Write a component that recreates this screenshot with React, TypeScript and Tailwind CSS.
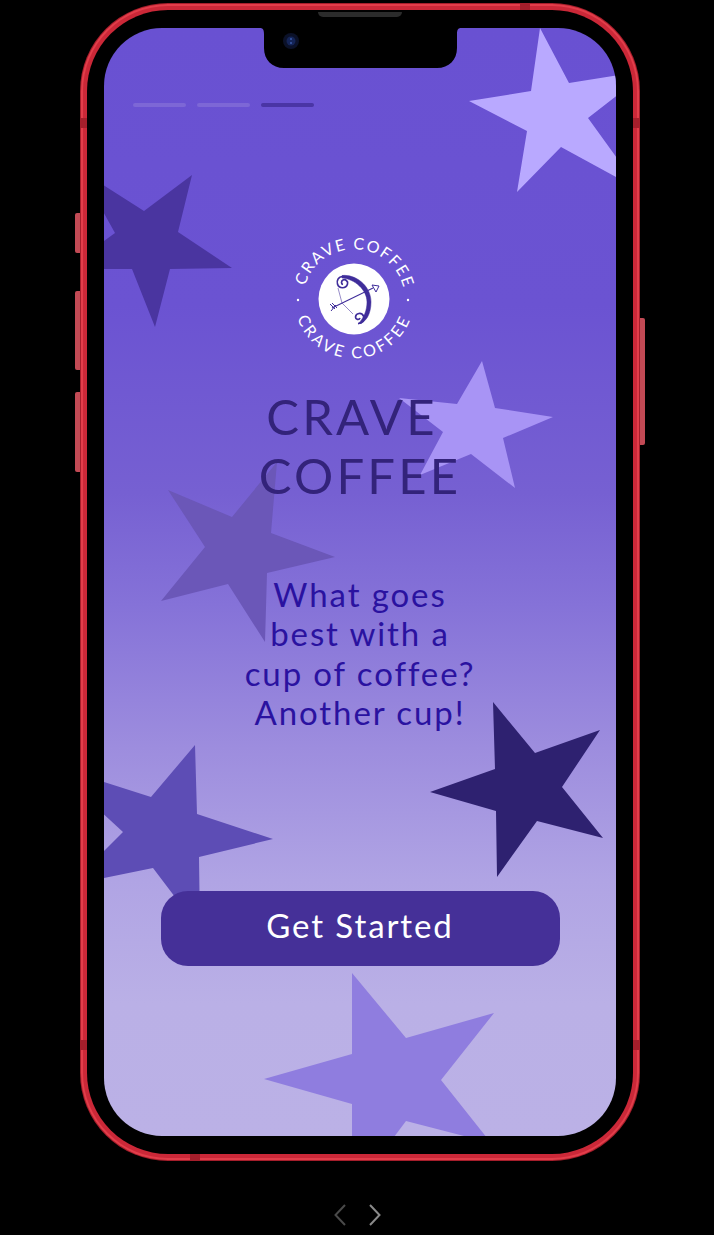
import React from "react";

const stars: { fill: string; points: string }[] = [
  { fill: "#b9a9ff", points: "540,28 569,83 650,70 588,118 640,190 561,147 517,192 527,131 469,101 531,91" },
  { fill: "#4a35a0", points: "192,175 178,232 232,268 170,269 155,327 132,269 65,269 115,233 80,170 144,211" },
  { fill: "#a894f5", points: "482,361 495,408 553,417 503,438 515,488 471,454 420,475 443,432 399,398 457,404" },
  { fill: "#6b57b8", points: "168,490 232,517 277,462 271,533 335,557 267,573 265,642 228,584 161,601 205,547" },
  { fill: "#2e2170", points: "493,702 535,753 600,730 562,787 603,838 537,821 497,877 496,811 430,792 495,769" },
  { fill: "#5d4db5", points: "195,745 197,814 273,839 199,857 200,930 153,868 70,885 123,832 50,765 151,797" },
  { fill: "#8f7ddf", points: "352,973 406,1038 494,1013 441,1080 491,1143 406,1121 352,1193 352,1104 264,1079 352,1054" },
];

function Logo() {
  return (
    <svg width="130" height="130" viewBox="0 0 130 130" className="block">
      <defs>
        <path id="arcTop" d="M 16 52 A 51 51 0 0 1 114 52" />
        <path id="arcBottom" d="M 8.2 84 A 60 60 0 0 0 120.5 87" />
      </defs>
      <text fill="#ffffff" fontSize="16" fontFamily="Lato, sans-serif">
        <textPath href="#arcTop" textLength="133" lengthAdjust="spacing">CRAVE COFFEE</textPath>
      </text>
      <text fill="#ffffff" fontSize="16" fontFamily="Lato, sans-serif">
        <textPath href="#arcBottom" textLength="146" lengthAdjust="spacing">CRAVE COFFEE</textPath>
      </text>
      <circle cx="9" cy="66" r="1.2" fill="#fff" />
      <circle cx="119" cy="66" r="1.2" fill="#fff" />
      <circle cx="65" cy="65" r="35.5" fill="#fff" />
      <path d="M53 41.5 C 67 40 82 52 82 68 C 82 80 77 89 69 90 C 75 84 78 76 78 68 C 78 56 66 45 53 44 Z" fill="#3f2d9a" stroke="#3f2d9a" strokeWidth="0.5" />
      <path d="M54 42.5 C 49 42.5 47.5 47 48.5 50 C 50 55 57 55 58.5 50 C 59.5 47 56 45 54 46 C 52 47 52 50 54 50.5" fill="none" stroke="#3f2d9a" strokeWidth="1.7" />
      <path d="M69 89.5 C 73.5 89.5 76.5 86 74.5 82 C 72.5 78 67 79 66.5 83 C 66.5 85.5 70 86.5 71 84" fill="none" stroke="#3f2d9a" strokeWidth="1.7" />
      <path d="M49 54 L 53 69 L 64 80" fill="none" stroke="#6a5ab0" strokeWidth="0.7" />
      <path d="M43 74 L 84 54" fill="none" stroke="#3f2d9a" strokeWidth="1.1" />
      <path d="M83 51 L 90 52 L 87 58 Z" fill="#fff" stroke="#3f2d9a" strokeWidth="1" />
      <path d="M41 70 L 46 75 M43 69 L 48 74 M42 77 L 47 71" fill="none" stroke="#3f2d9a" strokeWidth="1" />
    </svg>
  );
}

export default function App() {
  return (
    <div className="flex h-[1235px] w-[714px] flex-col items-center overflow-hidden bg-black pt-[3px] font-['Lato',sans-serif]">
      <div className="relative ml-[6px] h-[1158px] w-[560px] shrink-0">
        {/* side buttons */}
        <div className="absolute left-[-5px] top-[210px] h-[40px] w-[6px] rounded-l-[2px] bg-[#c24a55]" />
        <div className="absolute left-[-5px] top-[288px] h-[79px] w-[6px] rounded-l-[2px] bg-[#c24a55]" />
        <div className="absolute left-[-5px] top-[389px] h-[80px] w-[6px] rounded-l-[2px] bg-[#c24a55]" />
        <div className="absolute right-[-5px] top-[315px] h-[127px] w-[6px] rounded-r-[2px] bg-[#c24a55]" />

        {/* frame */}
        <div className="relative h-full w-full rounded-[88px] bg-[#a51e2b] p-px">
          <div className="h-full w-full rounded-[87px] bg-[#e23d4a] p-[2px]">
            <div className="h-full w-full rounded-[85px] bg-[#cb2838] p-[4px]">
              <div className="flex h-full w-full justify-center rounded-[81px] bg-black pt-[18px]">
                {/* screen */}
                <div className="relative h-[1108px] w-[512px] overflow-hidden rounded-[58px] bg-[linear-gradient(180deg,#6951d2_0%,#6b53d2_25%,#7660d2_42%,#8572d8_52%,#9d8dde_65%,#b0a4e4_77%,#bab0e6_88%,#bbb1e6_100%)]">
                  <svg className="absolute inset-0 h-full w-full" viewBox="104 28 512 1108">
                    {stars.map((s) => (
                      <polygon key={s.points} points={s.points} fill={s.fill} />
                    ))}
                  </svg>

                  {/* notch */}
                  <svg className="absolute left-[156px] top-0" width="201" height="40" viewBox="0 0 201 40">
                    <path d="M0 0 C 3 0 4 2 4 6 V 20 C 4 32 12 40 24 40 H 177 C 189 40 197 32 197 20 V 6 C 197 2 198 0 201 0 Z" fill="#000" />
                    <circle cx="31" cy="13" r="8" fill="#0b1128" />
                    <circle cx="31" cy="13" r="4.5" fill="#142457" />
                    <circle cx="31" cy="11" r="1" fill="#3a5aa8" />
                    <circle cx="31" cy="15" r="1" fill="#3a5aa8" />
                  </svg>

                  <div className="relative flex h-full flex-col items-center pt-[75px]">
                    <div className="flex w-full gap-[11px] pl-[29px]">
                      <div className="h-[4px] w-[53px] rounded-full bg-[#7d67d6]" />
                      <div className="h-[4px] w-[53px] rounded-full bg-[#7d67d6]" />
                      <div className="h-[4px] w-[53px] rounded-full bg-[#4a35a5]" />
                    </div>

                    <div className="mt-[127px] mr-[12px]">
                      <Logo />
                    </div>

                    <h1 className="mt-[23px] flex flex-col items-center text-[49px] font-normal leading-[59px] tracking-[3.2px] text-[#33237a]">
                      <span className="mr-[16px]">CRAVE</span>
                      <span>COFFEE</span>
                    </h1>

                    <p className="mt-[70px] text-center text-[33px] font-normal leading-[39.3px] tracking-[1.9px] text-[#2a12a0]">
                      What goes
                      <br />
                      best with a
                      <br />
                      cup of coffee?
                      <br />
                      Another cup!
                    </p>

                    <button className="mt-[159px] flex h-[75px] w-[399px] items-center justify-center rounded-[27px] bg-[#453098] pb-[6px] text-[33px] font-normal tracking-[1.9px] text-white">
                      Get Started
                    </button>
                  </div>
                </div>
              </div>
            </div>
          </div>
        </div>

        {/* antenna bands */}
        <div className="absolute left-0 top-[115px] h-[10px] w-[7px] bg-[#a51e2b]" />
        <div className="absolute left-0 top-[1037px] h-[10px] w-[7px] bg-[#a51e2b]" />
        <div className="absolute right-0 top-[115px] h-[10px] w-[7px] bg-[#a51e2b]" />
        <div className="absolute right-0 top-[1037px] h-[10px] w-[7px] bg-[#a51e2b]" />
        <div className="absolute left-[110px] bottom-0 h-[7px] w-[10px] bg-[#a51e2b]" />
        <div className="absolute right-[110px] top-0 h-[7px] w-[10px] bg-[#a51e2b]" />

        {/* speaker */}
        <div className="absolute left-[238px] top-[9px] h-[5px] w-[84px] rounded-b-full bg-[#2b2b2b]" />
      </div>

      <div className="mt-[43px] flex gap-[23px]">
        <svg width="12" height="22" viewBox="0 0 12 22" fill="none" stroke="#4a4a4a" strokeWidth="2">
          <path d="M11 1 L 1.5 11 L 11 21" />
        </svg>
        <svg width="12" height="22" viewBox="0 0 12 22" fill="none" stroke="#8a8a8a" strokeWidth="2">
          <path d="M1 1 L 10.5 11 L 1 21" />
        </svg>
      </div>
    </div>
  );
}
